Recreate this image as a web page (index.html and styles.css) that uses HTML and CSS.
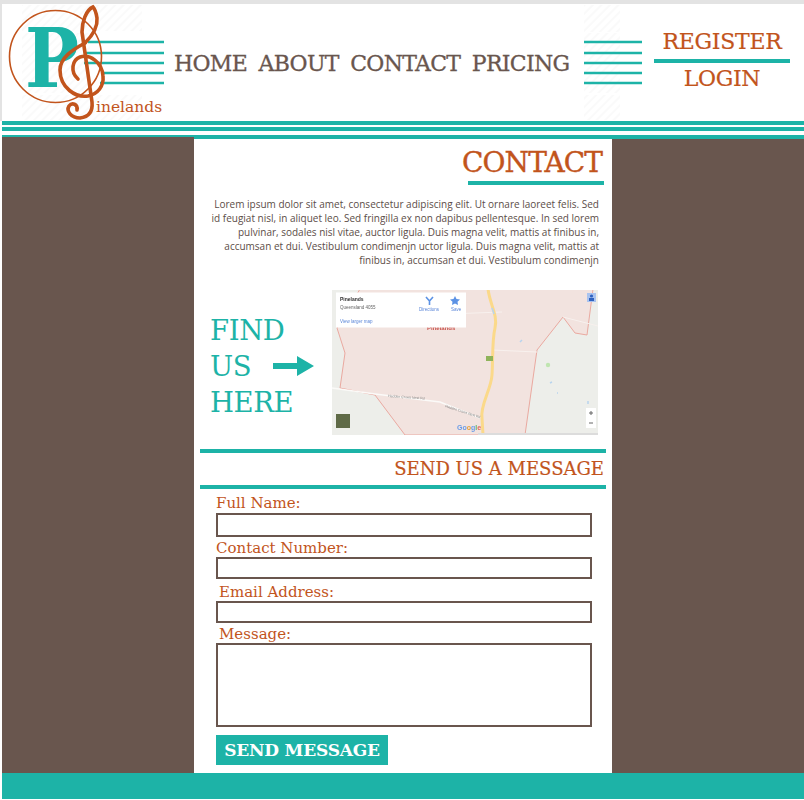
FILE: index.html
```html
<!DOCTYPE html>
<html lang="en">
<head>
  <meta charset="UTF-8">
  <meta name="viewport" content="width=device-width, initial-scale=1.0">
  <title>Pinelands - Contact</title>
  <link rel="stylesheet" href="styles.css">
</head>
<body>
  <header class="site-header">
    <svg class="logo" width="165" height="117" viewBox="0 4 165 117" role="img" aria-label="Pinelands">
      <defs>
        <pattern id="hatch" width="6" height="6" patternUnits="userSpaceOnUse" patternTransform="rotate(-45)">
          <rect width="6" height="2" fill="#fafafa"></rect>
        </pattern>
      </defs>
      <rect x="22" y="5" width="120" height="26" fill="url(#hatch)"></rect>
      <rect x="22" y="33" width="68" height="60" fill="url(#hatch)"></rect>
      <rect x="22" y="95" width="120" height="25" fill="url(#hatch)"></rect>
      <path d="M88 42H164M84 53H164M84 63H164M102 73H164M100 83H164" stroke="#1db3a7" stroke-width="2.4"></path>
      <circle cx="55.5" cy="56.5" r="46" fill="none" stroke="#c2541c" stroke-width="1.6"></circle>
      <text class="logo-p" x="25" y="87" textLength="54" lengthAdjust="spacingAndGlyphs">P</text>
      <g fill="none" stroke="#c2541c" stroke-width="3.6" stroke-linecap="round">
        <path d="M85 43C72 50 60 58 60 70C60 88 76 98 88 96C98 94 104 86 103 76C102 62 90 54 80 57C72 60 70 72 78 79"></path>
        <path d="M85 43C92 36 98 28 97 18C96 12 94 8 93 7C86 10 82 22 82 32L92 102C93 112 88 117 80 118C71 118 66 111 69 106C72 102 78 104 77 110"></path>
      </g>
      <text class="logo-name" x="96" y="112">inelands</text>
    </svg>

    <nav class="main-nav">
      <a href="#">HOME</a>
      <a href="#">ABOUT</a>
      <a href="#">CONTACT</a>
      <a href="#">PRICING</a>
    </nav>

    <svg class="staff" width="58" height="117" viewBox="0 0 58 117" aria-hidden="true">
      <rect x="0" y="1" width="36" height="27" fill="url(#hatch)"></rect>
      <rect x="0" y="29" width="36" height="60" fill="url(#hatch)"></rect>
      <rect x="0" y="91" width="36" height="25" fill="url(#hatch)"></rect>
      <path d="M0 38H58M0 49H58M0 59H58M0 69H58M0 79H58" stroke="#1db3a7" stroke-width="2.4"></path>
    </svg>

    <div class="account-links">
      <a href="#">REGISTER</a>
      <a href="#">LOGIN</a>
    </div>
  </header>

  <div class="bands">
    <div class="band"></div>
    <div class="band"></div>
    <div class="band"></div>
  </div>

  <div class="layout">
    <div class="side side-left"></div>

    <main class="content">
      <h1 class="page-title">CONTACT</h1>
      <div class="title-rule"></div>
      <p class="intro">
        Lorem ipsum dolor sit amet, consectetur adipiscing elit. Ut ornare laoreet felis. Sed<br>
        id feugiat nisl, in aliquet leo. Sed fringilla ex non dapibus pellentesque. In sed lorem<br>
        pulvinar, sodales nisl vitae, auctor ligula. Duis magna velit, mattis at finibus in,<br>
        accumsan et dui. Vestibulum condimenjn uctor ligula. Duis magna velit, mattis at<br>
        finibus in, accumsan et dui. Vestibulum condimenjn
      </p>

      <section class="find-us">
        <div class="find-text">FIND<br>US<br>HERE</div>
        <svg class="find-arrow" width="41" height="20" viewBox="0 0 41 20" aria-hidden="true">
          <path d="M0 7H24V0L41 10L24 20V13H0Z" fill="#1db3a7"></path>
        </svg>
        <svg class="map" width="266" height="145" viewBox="0 0 266 145" role="img" aria-label="Map of Pinelands">
          <defs>
            <filter id="soft"><feGaussianBlur stdDeviation="0.7"></feGaussianBlur></filter>
          </defs>
          <g filter="url(#soft)">
            <rect width="266" height="145" fill="#edeeea"></rect>
            <path d="M28 -1L5 38L13 63L8 98L43 105L73 145H193L205 60L231 27L243 43L255 45L261 -1Z" fill="#f2e3df" stroke="#eaa9a0" stroke-width="1"></path>
            <path d="M0 98L43 104L108 112L148 128" fill="none" stroke="#fbfaf8" stroke-width="1.6"></path>
            <path d="M231 27L266 36M116 24L170 22M205 62L160 60" fill="none" stroke="#f8f1ee" stroke-width="1"></path>
            <path d="M156 -1C158 15 166 25 163 38C160 50 161 70 160 85C159 100 148 115 150 128L151 145" fill="none" stroke="#fbd98a" stroke-width="3"></path>
            <rect x="154" y="66" width="7" height="5" fill="#8fb35a"></rect>
            <circle cx="216" cy="75" r="2.2" fill="#bfe5b0"></circle>
            <path d="M160 18L162 24M188 52L190 50M218 93L220 92M225 103L226 103M256 111V114" stroke="#b8d4ee" stroke-width="1.5"></path>
            <text class="map-road" x="56" y="107" transform="rotate(4 56 107)">Hadden Crows Nest Rd</text>
            <text class="map-road" x="113" y="117" transform="rotate(18 113 117)">Hadden Crows Nest Rd</text>
            <text class="map-place" x="95" y="40">Pinelands</text>
            <rect x="4" y="2.5" width="130" height="35" fill="#fff"></rect>
            <text class="map-name" x="8" y="11">Pinelands</text>
            <text class="map-small" x="8" y="18.5">Queensland 4055</text>
            <text class="map-link" x="8" y="33">View larger map</text>
            <text class="map-link" x="87" y="21">Directions</text>
            <text class="map-link" x="119" y="21">Save</text>
            <path d="M94 7L97.5 11V15M101 7L97.5 11" fill="none" stroke="#5b92e5" stroke-width="1.6"></path>
            <path d="M123 6L124.5 9L128 9.5L125.5 11.7L126 15L123 13.4L120 15L120.5 11.7L118 9.5L121.5 9Z" fill="#5b92e5"></path>
            <rect x="255" y="3" width="9" height="9" fill="#a9c3ef"></rect>
            <circle cx="259.5" cy="6" r="1.6" fill="#2f62c0"></circle>
            <rect x="257" y="8" width="5" height="3" fill="#2f62c0"></rect>
            <rect x="254" y="118" width="10" height="20" fill="#fff"></rect>
            <path d="M257 123H261M259 121V125M257 133H261" stroke="#666" stroke-width="1"></path>
            <rect x="4" y="124" width="14" height="14" fill="#5f6b46"></rect>
            <text class="map-google" x="125" y="140"><tspan fill="#6a9ce8">Go</tspan><tspan fill="#e8a33a">o</tspan><tspan fill="#6a9ce8">g</tspan><tspan fill="#5eb56e">l</tspan><tspan fill="#e06a5c">e</tspan></text>
            <rect x="146" y="143" width="120" height="2" fill="#dcdcdc"></rect>
          </g>
        </svg>
      </section>

      <div class="msg-rule msg-rule-top"></div>
      <h2 class="msg-title">SEND US A MESSAGE</h2>
      <div class="msg-rule"></div>

      <form class="contact-form">
        <label for="fullName">Full Name:</label>
        <input type="text" id="fullName" name="full_name" class="field-tall">

        <label for="contactNumber">Contact Number:</label>
        <input type="text" id="contactNumber" name="contact_number" class="field-gap">

        <label for="email" class="label-shift">Email Address:</label>
        <input type="text" id="email" name="email">

        <label for="message" class="label-shift">Message:</label>
        <textarea id="message" name="message"></textarea>

        <button type="submit">SEND MESSAGE</button>
      </form>
    </main>

    <div class="side"></div>
  </div>

  <footer class="site-footer"></footer>
</body>
</html>
```

FILE: styles.css
```css
body { margin: 0; background: #fff; font-family: "DejaVu Serif", serif; }
a { color: inherit; text-decoration: none; }

/* header */
.site-header { display: flex; height: 117px; border-top: 4px solid #e3e3e3; border-left: 2px solid #e3e3e3; }
.logo { flex: none; margin-left: -2px; }
.logo-p { font-family: "DejaVu Serif", serif; font-size: 82px; font-weight: bold; fill: #1db3a7; }
.logo-name { font-size: 15.5px; fill: #c2541c; }
.main-nav { display: flex; gap: 11.5px; align-items: center; box-sizing: border-box; margin-left: 9px; padding-top: 2px; width: 410px; height: 117px; color: #69564e; font-size: 22px; letter-spacing: -0.7px; -webkit-text-stroke: 0.3px #69564e; }
.staff { flex: none; }
.account-links { width: 136px; margin-left: 12px; color: #c2541c; font-size: 22px; letter-spacing: -0.3px; text-align: center; -webkit-text-stroke: 0.2px #c2541c; }
.account-links a { display: block; height: 34px; line-height: 32px; }
.account-links a:first-child { margin-top: 20px; border-bottom: 4px solid #1db3a7; height: 35px; line-height: 36px; }

/* teal lines under the header */
.bands { margin-left: 2px; }
.band { height: 4px; margin-bottom: 2px; background: #1db3a7; }
.band:last-child { margin: 4px 0 0; }

.layout { display: grid; grid-template-columns: 192px 418px 192px; height: 634px; margin-left: 2px; }
.side { background: #69564e; }
.side-left { margin-top: -2px; }
.content { background: #fff; padding: 0 6px; }

/* contact text */
.page-title { margin: 5px 4px 0 0; text-align: right; color: #c2541c; font-size: 28px; font-weight: normal; letter-spacing: -0.9px; line-height: 37px; -webkit-text-stroke: 0.4px #c2541c; }
.title-rule { width: 136px; height: 4px; margin-left: auto; margin-right: 2px; background: #1db3a7; }
.intro { margin: 12px 7px 0 0; text-align: right; white-space: nowrap; color: #5c4d48; font-family: "Open Sans", sans-serif; font-size: 10px; line-height: 14px; }

/* map row */
.find-us { display: flex; align-items: center; margin-top: 23px; }
.find-text { width: 63px; margin: 6px 0 0 10px; color: #1db3a7; font-size: 27.5px; letter-spacing: -0.4px; line-height: 36px; }
.find-arrow { flex: none; margin-top: 6px; }
.map { flex: none; margin-left: 18px; }
.map-road { font: 3.5px "Liberation Sans", sans-serif; fill: #888; }
.map-place { font: bold 6px "Liberation Sans", sans-serif; fill: #c8504a; }
.map-name { font: bold 5px "Liberation Sans", sans-serif; fill: #333; }
.map-small { font: 4.5px "Liberation Sans", sans-serif; fill: #666; }
.map-link { font: 4.5px "Liberation Sans", sans-serif; fill: #5b86d8; }
.map-google { font: bold 7px "Liberation Sans", sans-serif; }

/* message form */
.msg-rule { height: 4px; background: #1db3a7; }
.msg-rule-top { margin-top: 14px; }
.msg-title { margin: 0; padding-right: 2px; text-align: right; color: #c2541c; font-size: 18px; font-weight: normal; line-height: 32px; -webkit-text-stroke: 0.2px #c2541c; }
.contact-form { padding: 5px 14px 0 16px; }
.contact-form label { display: block; height: 18px; color: #c2541c; font-size: 15px; line-height: 18px; }
.contact-form label:first-child { height: 19px; line-height: 19px; }
.contact-form .label-shift { padding-left: 3px; }
.contact-form input, .contact-form textarea { display: block; box-sizing: border-box; width: 376px; height: 22px; margin: 0 0 2px; padding: 0; border: 2px solid #69564e; border-radius: 0; background: #fff; resize: none; }
.contact-form .field-tall { height: 24px; }
.contact-form .field-gap { margin-bottom: 4px; }
.contact-form textarea { height: 84px; }
.contact-form button { display: block; width: 172px; height: 30px; margin-top: 8px; padding: 0; border: none; background: #1db3a7; color: #fff; font-family: inherit; font-size: 17px; font-weight: bold; letter-spacing: -0.2px; cursor: pointer; }

.site-footer { height: 26px; margin-left: 2px; background: #1db3a7; }
```
